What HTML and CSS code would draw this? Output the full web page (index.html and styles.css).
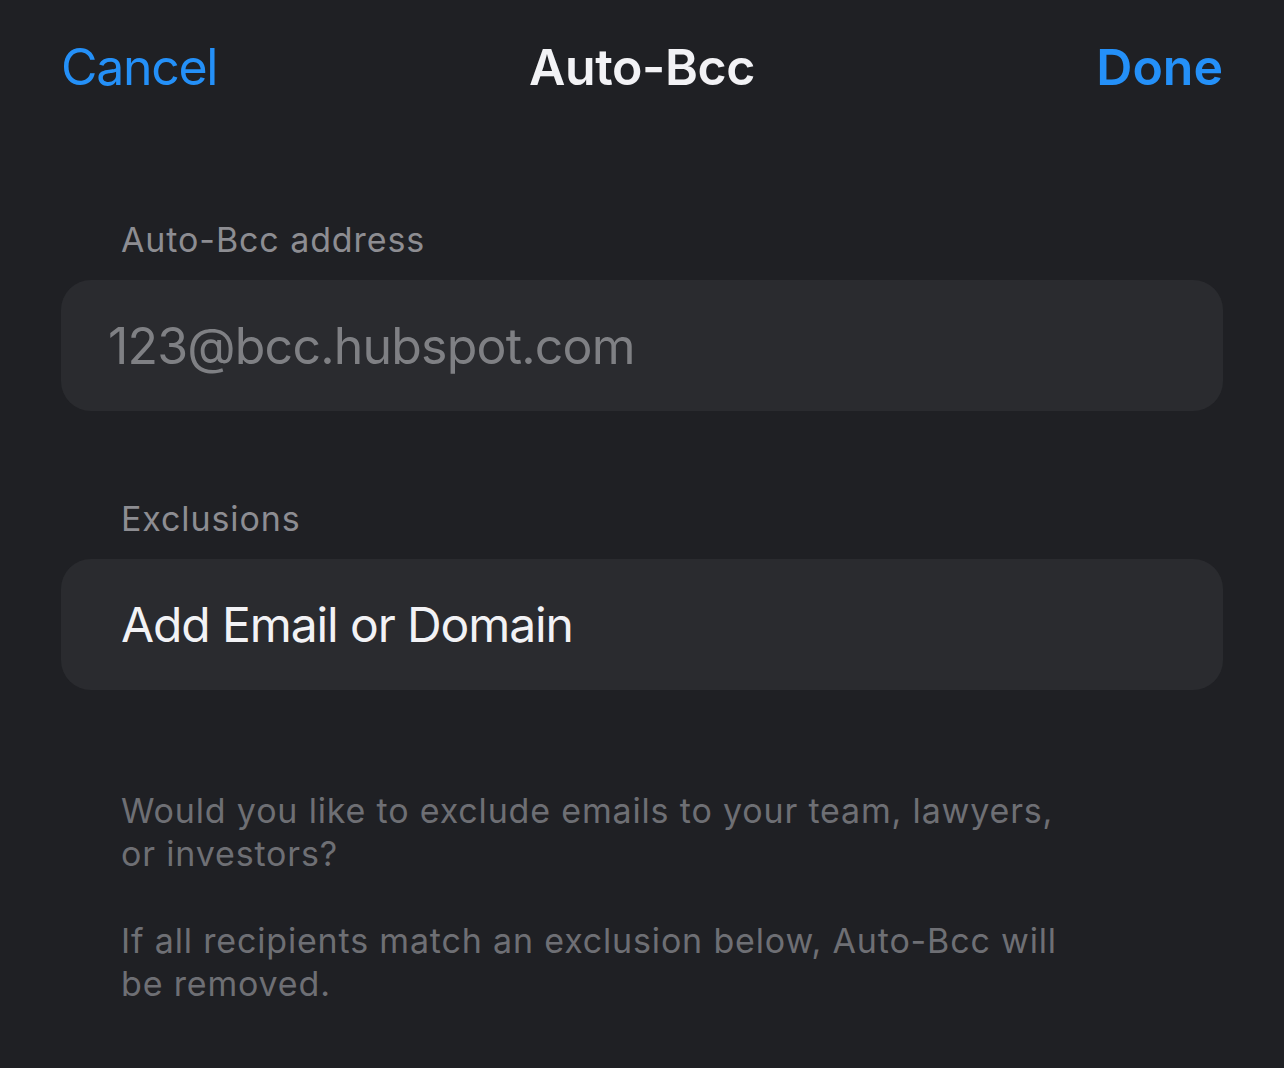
FILE: index.html
```html
<!DOCTYPE html>
<html>
<head>
<meta charset="utf-8">
<link rel="stylesheet" href="styles.css">
</head>
<body>
<div class="screen">
  <header class="nav">
    <span class="nav-btn cancel">Cancel</span>
    <span class="nav-title">Auto-Bcc</span>
    <span class="nav-btn done">Done</span>
  </header>
  <section class="group group-first">
    <div class="label">Auto-Bcc address</div>
    <div class="card"><span class="field">123@bcc.hubspot.com</span></div>
  </section>
  <section class="group">
    <div class="label">Exclusions</div>
    <div class="card"><span class="row-text">Add Email or Domain</span></div>
  </section>
  <section class="footer">
    <p>Would you like to exclude emails to your team, lawyers,<br>or investors?</p>
    <p>If all recipients match an exclusion below, Auto-Bcc will<br>be removed.</p>
  </section>
</div>
</body>
</html>
```
FILE: styles.css
```css
html, body {
  margin: 0;
  padding: 0;
  background: #1f2024;
}
.screen {
  width: 1284px;
  height: 1068px;
  box-sizing: border-box;
  padding: 0 61px;
  font-family: Inter, "Noto Sans", sans-serif;
  color: #f2f2f5;
  overflow: hidden;
}
.nav {
  height: 134px;
  display: flex;
  align-items: center;
  justify-content: space-between;
  position: relative;
}
.nav-btn {
  font-size: 50px;
  color: #2490f8;
}
.cancel {
  font-weight: 400;
  letter-spacing: -1.3px;
}
.done { font-weight: 600; }
.nav-title {
  position: absolute;
  left: 50%;
  transform: translateX(-50%);
  font-size: 50px;
  font-weight: 600;
  letter-spacing: -0.4px;
  color: #f2f2f5;
}
.group { margin-top: 86px; }
.group.group-first { margin-top: 84px; }
.label {
  font-size: 34px;
  letter-spacing: 0.9px;
  color: #8d8d92;
  padding-left: 60px;
  height: 44px;
  line-height: 44px;
  margin-bottom: 18px;
}
.card {
  background: #2a2b2f;
  border-radius: 30px;
  height: 131px;
  display: flex;
  align-items: center;
}
.field {
  font-size: 50px;
  letter-spacing: -0.8px;
  color: #7f8084;
  padding-left: 47px;
}
.row-text {
  font-size: 48px;
  letter-spacing: -1.1px;
  color: #f2f2f5;
  padding-left: 60px;
}
.footer {
  margin-top: 99px;
  padding-left: 60px;
}
.footer p {
  margin: 0 0 44px 0;
  font-size: 34px;
  line-height: 43px;
  letter-spacing: 0.83px;
  color: #6e6f74;
}
```
